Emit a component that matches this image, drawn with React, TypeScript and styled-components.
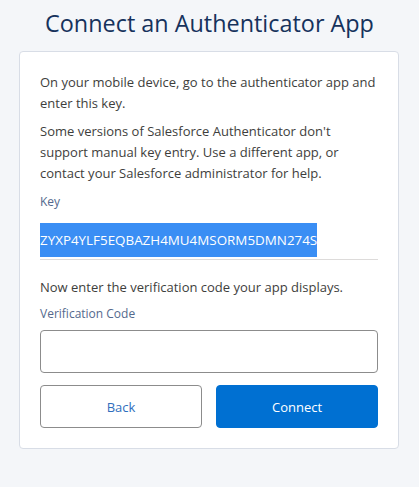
import React from "react";
import styled, { createGlobalStyle } from "styled-components";

const GlobalStyle = createGlobalStyle`
    html, body {
        margin: 0;
        padding: 0;
        background: #f4f6f9;
    }
    body {
        font-family: "Open Sans", "Liberation Sans", sans-serif;
    }
`;

const Page = styled.main`
    display: flex;
    flex-direction: column;
    align-items: center;
    width: 419px;
    min-height: 487px;
    background: #f4f6f9;
`;

const Title = styled.h2`
    margin: 8px 0 13px;
    font-size: 23.4px;
    font-weight: 400;
    line-height: 30px;
    color: #16325c;
`;

const Card = styled.section`
    box-sizing: border-box;
    width: 380px;
    margin-left: -1px;
    padding: 20px;
    background: #fff;
    border: 1px solid #d8dde6;
    border-radius: 4px;
`;

const Text = styled.p<{ $gap?: number }>`
    margin: ${(p) => p.$gap ?? 0}px 0 7px;
    font-size: 13px;
    line-height: 21px;
    color: #3e3e3c;
`;

const Label = styled.div<{ $gap?: number }>`
    margin-top: ${(p) => p.$gap ?? 0}px;
    font-size: 12px;
    line-height: 18px;
    color: #54698d;
`;

const KeyField = styled.div`
    margin-top: 12px;
    padding-bottom: 2px;
    border-bottom: 1px solid #dddbda;
`;

const KeyValue = styled.span`
    display: inline-block;
    height: 34px;
    line-height: 34px;
    font-size: 13.4px;
    color: #fff;
    background: #3a8ef4;
`;

const Input = styled.input`
    box-sizing: border-box;
    display: block;
    width: 100%;
    height: 43px;
    margin-top: 7px;
    border: 1px solid #8c8c8c;
    border-radius: 4px;
    background: #fff;
`;

const Actions = styled.div`
    display: grid;
    grid-template-columns: 1fr 1fr;
    gap: 14px;
    margin-top: 12px;
`;

const Button = styled.button<{ $primary?: boolean }>`
    height: 43px;
    border-radius: 4px;
    font-family: inherit;
    font-size: 13px;
    border: 1px solid ${(p) => (p.$primary ? "#0070d2" : "#8c8c8c")};
    background: ${(p) => (p.$primary ? "#0070d2" : "#fff")};
    color: ${(p) => (p.$primary ? "#fff" : "#2f6ebd")};
`;

export default function App() {
    return (
        <Page>
            <GlobalStyle />
            <Title>Connect an Authenticator App</Title>
            <Card>
                <Text>On your mobile device, go to the authenticator app and enter this key.</Text>
                <Text>
                    Some versions of Salesforce Authenticator don't support manual key entry. Use a
                    different app, or contact your Salesforce administrator for help.
                </Text>
                <Label $gap={9}>Key</Label>
                <KeyField>
                    <KeyValue>ZYXP4YLF5EQBAZH4MU4MSORM5DMN274S</KeyValue>
                </KeyField>
                <Text $gap={17}>Now enter the verification code your app displays.</Text>
                <Label>Verification Code</Label>
                <Input type="text" />
                <Actions>
                    <Button>Back</Button>
                    <Button $primary>Connect</Button>
                </Actions>
            </Card>
        </Page>
    );
}
